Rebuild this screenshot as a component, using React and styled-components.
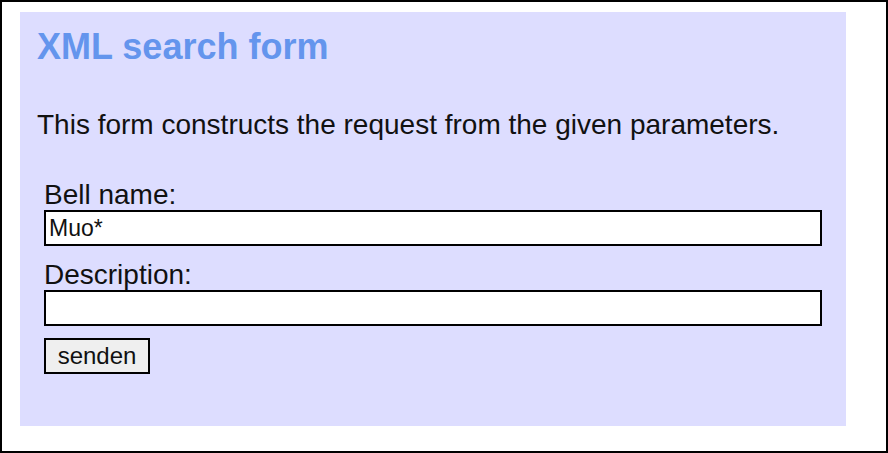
import React, { useState } from 'react';
import styled, { createGlobalStyle } from 'styled-components';

const GlobalStyle = createGlobalStyle`
  html, body {
    margin: 0;
    padding: 0;
    background: #fff;
  }
  * {
    box-sizing: border-box;
  }
`;

const App = () => {
  const [bellName, setBellName] = useState('Muo*');
  const [description, setDescription] = useState('');

  return (
    <>
      <GlobalStyle />
      <Frame>
        <Panel>
          <Title>XML search form</Title>
          <Intro>This form constructs the request from the given parameters.</Intro>
          <Form onSubmit={(e) => e.preventDefault()}>
            <Label htmlFor="bell">Bell name:</Label>
            <TextInput
              id="bell"
              value={bellName}
              onChange={(e) => setBellName(e.target.value)}
            />
            <Label htmlFor="desc" spaced>Description:</Label>
            <TextInput
              id="desc"
              value={description}
              onChange={(e) => setDescription(e.target.value)}
            />
            <SubmitButton type="submit">senden</SubmitButton>
          </Form>
        </Panel>
      </Frame>
    </>
  );
};

const Frame = styled.div`
  width: 888px;
  height: 453px;
  border: 2px solid #000;
  padding: 10px 0 0 18px;
  background: #fff;
  font-family: "Liberation Sans", Arial, sans-serif;
`;

const Panel = styled.div`
  width: 826px;
  height: 414px;
  background-color: #ddddff;
  padding: 14px 0 0 17px;
  display: flex;
  flex-direction: column;
`;

const Title = styled.h1`
  margin: 0;
  font-size: 36px;
  line-height: 42px;
  font-weight: bold;
  color: #6495ed;
`;

const Intro = styled.p`
  margin: 40px 0 0 0;
  font-size: 28px;
  line-height: 34px;
  color: #111;
`;

const Form = styled.form`
  display: flex;
  flex-direction: column;
  align-items: flex-start;
  margin: 37px 0 0 7px;
`;

const Label = styled.label`
  font-size: 28px;
  line-height: 31px;
  color: #111;
  margin-top: ${({ spaced }) => (spaced ? '13px' : '0')};
`;

const TextInput = styled.input`
  width: 778px;
  height: 36px;
  border: 2px solid #000;
  border-radius: 0;
  background: #fff;
  padding: 0 3px;
  margin: 0;
  font-family: "Liberation Sans", Arial, sans-serif;
  font-size: 23px;
  color: #111;
  outline: none;
`;

const SubmitButton = styled.button`
  margin-top: 12px;
  width: 106px;
  height: 36px;
  border: 2px solid #000;
  border-radius: 0;
  background: #efefef;
  padding: 0;
  font-family: "Liberation Sans", Arial, sans-serif;
  font-size: 24px;
  color: #111;
  cursor: pointer;
`;

export default App;
